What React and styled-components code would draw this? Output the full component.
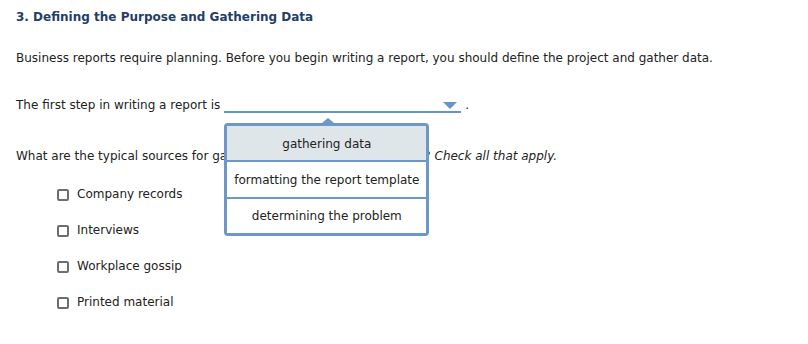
import React from "react";
import styled, { createGlobalStyle } from "styled-components";

const Global = createGlobalStyle`
  html, body { margin: 0; padding: 0; background: #fff; }
  body { font-family: "DejaVu Sans", Verdana, sans-serif; font-size: 12px; color: #222; }
`;

const Page = styled.div`
  padding: 10px 16px 0 16px;
  display: flex;
  flex-direction: column;
`;

const Title = styled.h3`
  margin: 0;
  font-size: 12px;
  font-weight: bold;
  color: #1f3e6a;
  line-height: 15px;
`;

const Para = styled.p`
  margin: ${(p) => p.$mt || 0}px 0 0 0;
  line-height: 15px;
`;

const Inline = styled.span`
  display: inline-block;
  position: relative;
  vertical-align: bottom;
`;

const Select = styled.span`
  display: inline-flex;
  align-items: center;
  justify-content: flex-end;
  width: 237px;
  height: 15px;
  border-bottom: 2px solid #6595c8;
  margin-left: 4px;
  padding-right: 4px;
  box-sizing: border-box;
`;

const Caret = styled.span`
  width: 0;
  height: 0;
  border-left: 7px solid transparent;
  border-right: 7px solid transparent;
  border-top: 7px solid #6595c8;
  margin-top: 2px;
`;

const Popup = styled.div`
  position: absolute;
  left: 4px;
  top: 25px;
  width: 205px;
  border: 3px solid #6d97c6;
  border-radius: 4px;
  background: #fff;
  box-sizing: border-box;
  display: flex;
  flex-direction: column;
  z-index: 5;
  &::before {
    content: "";
    position: absolute;
    left: 95px;
    top: -8px;
    border-left: 6px solid transparent;
    border-right: 6px solid transparent;
    border-bottom: 5px solid #6d97c6;
  }
`;

const Option = styled.div`
  height: ${(p) => p.$h}px;
  display: flex;
  align-items: center;
  justify-content: center;
  background: ${(p) => (p.$active ? "#dfe6ea" : "#fff")};
  border-top: ${(p) => (p.$first ? "none" : "2px solid #6d97c6")};
  color: #222;
  white-space: nowrap;
  line-height: 15px;
  padding-top: ${(p) => (p.$active ? 3 : 1)}px;
  box-sizing: border-box;
`;

const List = styled.div`
  display: flex;
  flex-direction: column;
  gap: 21px;
  margin: 23px 0 0 41px;
`;

const Item = styled.label`
  display: flex;
  align-items: center;
  gap: 8px;
  line-height: 15px;
`;

const Box = styled.span`
  width: 8px;
  height: 8px;
  border: 2px solid #6e6e6e;
  border-radius: 2px;
  display: inline-block;
`;

export default function App() {
  return (
    <>
      <Global />
      <Page>
        <Title>3. Defining the Purpose and Gathering Data</Title>
        <Para $mt={26}>
          Business reports require planning. Before you begin writing a report, you should define the project and gather data.
        </Para>
        <Para $mt={32}>
          The first step in writing a report is
          <Inline>
            <Select>
              <Caret />
            </Select>
            <Popup>
              <Option $first $active $h={34}>gathering data</Option>
              <Option $h={37}>formatting the report template</Option>
              <Option $h={36}>determining the problem</Option>
            </Popup>
          </Inline>
          {"  ."}
        </Para>
        <Para $mt={36}>
          What are the typical sources for gathering data for business reports? <i>Check all that apply.</i>
        </Para>
        <List>
          {["Company records", "Interviews", "Workplace gossip", "Printed material"].map((t) => (
            <Item key={t}>
              <Box />
              {t}
            </Item>
          ))}
        </List>
      </Page>
    </>
  );
}
